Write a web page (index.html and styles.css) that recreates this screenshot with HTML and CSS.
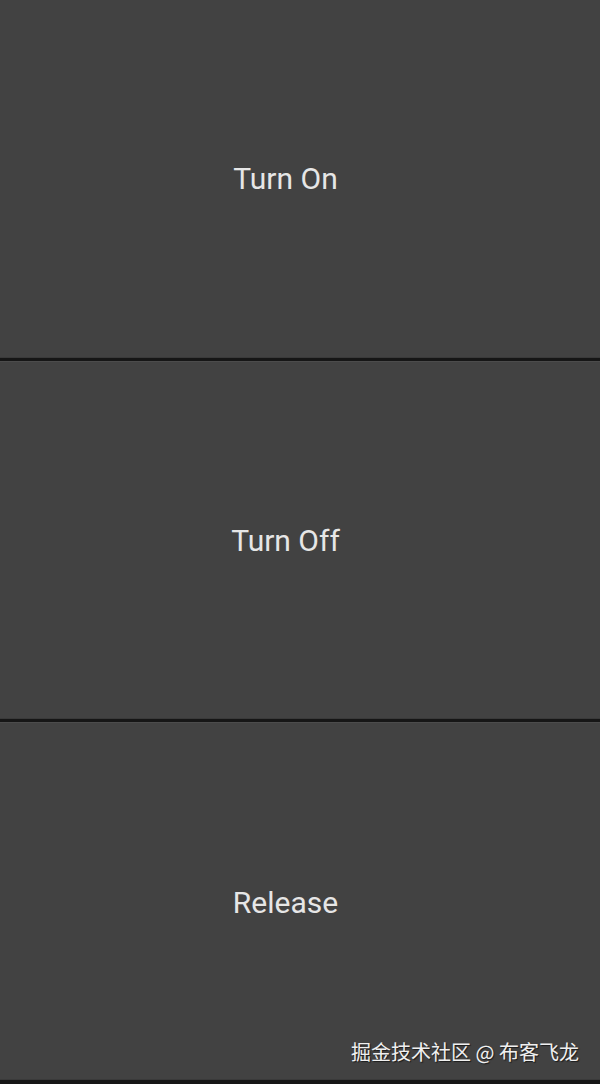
FILE: index.html
```html
<!DOCTYPE html>
<html>
<head>
<meta charset="utf-8">
<link rel="stylesheet" href="styles.css">
</head>
<body>
<div class="screen">
  <button class="panel">Turn On</button>
  <button class="panel">Turn Off</button>
  <button class="panel">Release</button>
  <div class="watermark">掘金技术社区 @ 布客飞龙</div>
</div>
</body>
</html>
```
FILE: styles.css
```css
html, body {
  margin: 0;
  padding: 0;
  background: #141414;
}
.screen {
  position: relative;
  width: 600px;
  height: 1084px;
  display: flex;
  flex-direction: column;
  gap: 3px;
  background: #161616;
}
.panel {
  height: 358px;
  flex: none;
  margin: 0;
  border: none;
  border-top: 1px solid #4c4c4c;
  border-bottom: 1px solid #3a3a3a;
  background: #424242;
  color: #e6e6e6;
  font-family: Roboto, "Noto Sans", sans-serif;
  font-size: 30px;
  font-weight: 400;
  text-align: center;
  padding: 0 29px 0 0;
}
.panel:first-child {
  border-top: none;
}
.panel:nth-child(2) {
  padding-bottom: 0;
  padding-top: 1px;
}
.panel:nth-child(3) {
  padding-top: 3px;
}
.watermark {
  position: absolute;
  right: 21px;
  top: 1037px;
  font-family: "Noto Sans CJK SC", sans-serif;
  font-size: 20px;
  color: #f0f0f0;
  text-shadow: 1px 1px 1px rgba(0,0,0,0.6);
}
```
